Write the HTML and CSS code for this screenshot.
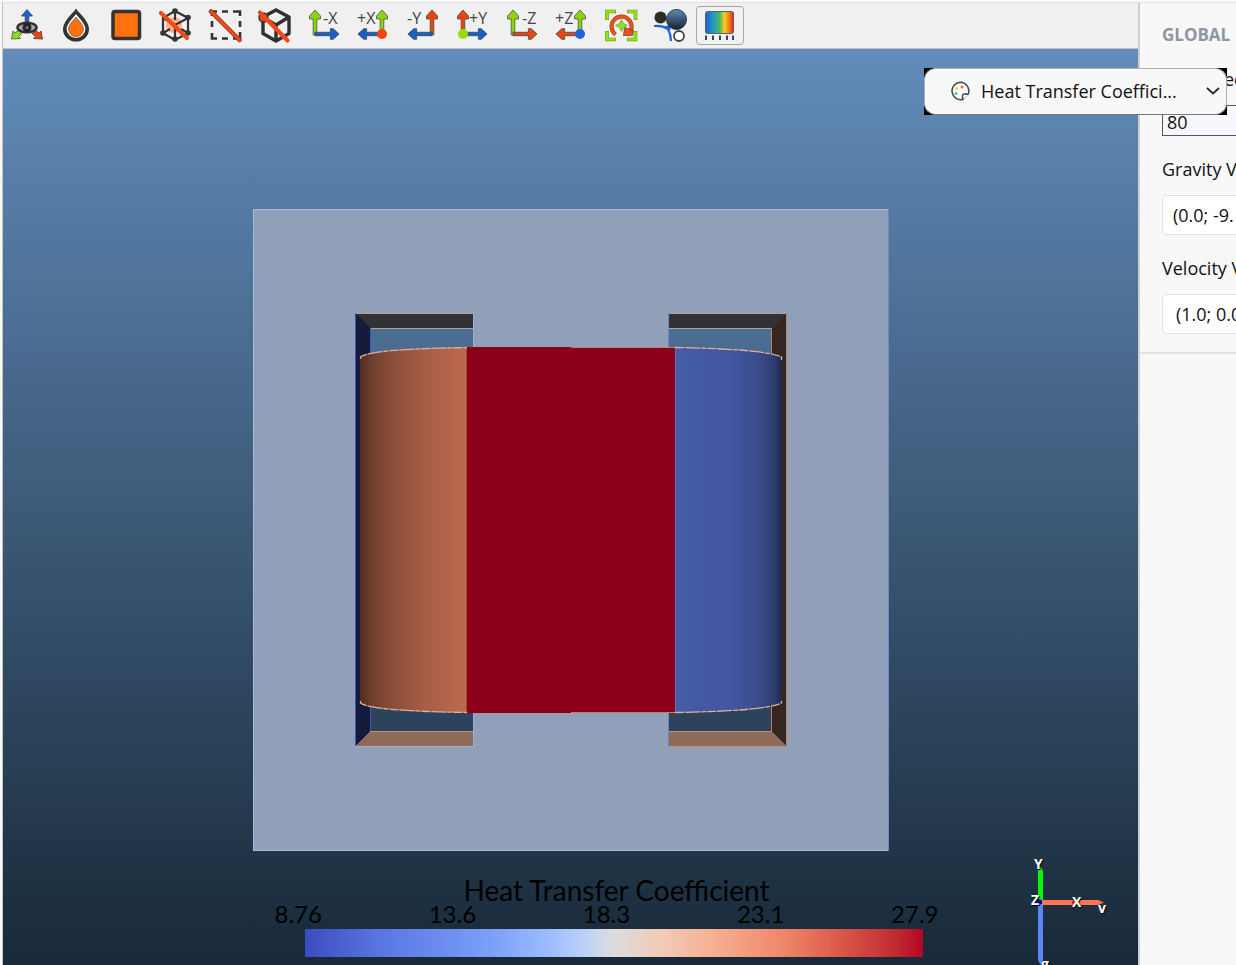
FILE: index.html
```html
<!DOCTYPE html>
<html lang="en">
<head>
<meta charset="utf-8">
<title>Heat Transfer Coefficient</title>
<link rel="stylesheet" href="styles.css">
</head>
<body>
<svg class="defs" aria-hidden="true">
  <defs>
    <linearGradient id="ball" x1="0" y1="0" x2="0" y2="1"><stop offset="0" stop-color="#5f8cbc"/><stop offset="1" stop-color="#14222f"/></linearGradient>
    <linearGradient id="rainbow"><stop offset="0" stop-color="#1f5fd0"/><stop offset=".3" stop-color="#23a0c0"/><stop offset=".5" stop-color="#4db560"/><stop offset=".68" stop-color="#f0d020"/><stop offset=".85" stop-color="#f57a1c"/><stop offset="1" stop-color="#e8201c"/></linearGradient>
    <symbol id="up" viewBox="0 0 12 27" overflow="visible"><path d="M4.200 26V10H.5V7L6 1l5.500 6v3H7.800V26z" stroke="#454" stroke-width=".8"/></symbol>
    <symbol id="side" viewBox="0 0 27 12" overflow="visible"><path d="M1 4.200H17V.5h3L26 6l-6 5.500h-3V7.800H1z" stroke="#345" stroke-width=".8"/></symbol>
  </defs>
</svg>
<div class="app">
  <main class="stage">
    <div class="toolbar" role="toolbar">
      <button class="tool" aria-label="Show axes"><svg viewBox="0 0 36 36"><path d="M16.200 15V9h-3.700L18 2.500 23.500 9h-3.700v6z" fill="#1f62d0" stroke="#345" stroke-width=".8"/><path d="M9.500 23.500l-4 2.500L4 24 2.500 32l9-.5-2-2 3.500-3z" fill="#8fdc1a" stroke="#453" stroke-width=".8"/><path d="M26.500 23.500l4 2.500 1.500-2 1.500 8-9-.5 2-2-3.500-3z" fill="#e8480f" stroke="#533" stroke-width=".8"/><ellipse cx="18" cy="20.500" rx="9.500" ry="4.800" fill="#aaa" stroke="#303030" stroke-width="2.600"/><circle cx="18" cy="20.500" r="4.500" fill="#252525"/><circle cx="18" cy="20.500" r="1.500" fill="#777"/></svg></button>
      <button class="tool" aria-label="Surface tint"><svg viewBox="0 0 36 36"><path d="M18 4.500C14 9.500 6.800 15 6.800 22a11.200 10.800 0 0 0 22.400 0C29.200 15 22 9.500 18 4.500z" fill="#fff" stroke="#333" stroke-width="3.600"/><path d="M18 10c-3 4-7.500 7.500-7.500 12a7.500 7.800 0 0 0 15 0C25.500 17.500 21 14 18 10z" fill="#ff700f" stroke="#555" stroke-width=".6"/></svg></button>
      <button class="tool" aria-label="Solid surface"><svg viewBox="0 0 36 36"><rect x="5" y="4.500" width="26.500" height="27" rx="2" fill="#ff700f" stroke="#333" stroke-width="3.500"/></svg></button>
      <button class="tool" aria-label="Hide points"><svg viewBox="0 0 36 36"><circle cx="17" cy="18" r="8" fill="#ff9a63" opacity=".75"/><path d="M18 4l13 7v15l-13 7-12-7V11zM18 18l13-7M18 18v15M18 18L6 11M18 4v9M6 26l7-4M31 26l-7-4" fill="none" stroke="#333" stroke-width="2.200"/><g fill="#333"><circle cx="18" cy="4" r="2.800"/><circle cx="31" cy="10.500" r="2.800"/><circle cx="31" cy="26" r="2.800"/><circle cx="18" cy="32" r="2.800"/><circle cx="6" cy="26" r="2.800"/></g><path d="M4 6l26 25" stroke="#f04a18" stroke-width="4.200" stroke-linecap="round"/></svg></button>
      <button class="tool" aria-label="Clear selection"><svg viewBox="0 0 36 36"><path d="M5 9V4.500h5M15 4.500h6M26 4.500h7V9M33 14v6M33 25v6.500h-7M21 31.500h-6M10 31.500H5V26M5 20v-6" fill="none" stroke="#333" stroke-width="2.600"/><path d="M4 4.500L32.500 33" stroke="#963018" stroke-width="4.500" stroke-linecap="round"/><path d="M4 4.500L32.500 33" stroke="#f84a0c" stroke-width="3" stroke-linecap="round"/></svg></button>
      <button class="tool" aria-label="Hide outline"><svg viewBox="0 0 36 36"><path d="M20 3l13 7v16.500L20 34 7 26.500V10zM20 18v15M20 18l13-8M20 18L8 11" fill="none" stroke="#303030" stroke-width="3.400"/><circle cx="7.500" cy="10.500" r="4.500" fill="#d85218" stroke="#433" stroke-width="1.500"/><path d="M4 5.500l27.500 28" stroke="#f04a18" stroke-width="4.200" stroke-linecap="round"/></svg></button>
      <button class="tool" aria-label="View minus X"><svg viewBox="0 0 36 36"><use href="#up" x="3" y="2" width="12" height="27" fill="#8fd40a"/><use href="#side" x="8" y="21" width="26" height="12" fill="#1b5fc6"/><text x="17" y="17">-X</text></svg></button>
      <button class="tool" aria-label="View plus X"><svg viewBox="0 0 36 36"><use href="#up" x="21" y="2" width="12" height="27" fill="#8fd40a"/><g transform="matrix(-1 0 0 1 36 0)"><use href="#side" x="8" y="21" width="26" height="12" fill="#1b5fc6"/></g><circle cx="27" cy="27" r="5" fill="#ff4208"/><text x="2" y="17">+X</text></svg></button>
      <button class="tool" aria-label="View minus Y"><svg viewBox="0 0 36 36"><use href="#up" x="21" y="2" width="12" height="27" fill="#e9440b"/><g transform="matrix(-1 0 0 1 36 0)"><use href="#side" x="8" y="21" width="26" height="12" fill="#1b5fc6"/></g><text x="2" y="17">-Y</text></svg></button>
      <button class="tool" aria-label="View plus Y"><svg viewBox="0 0 36 36"><use href="#up" x="3" y="2" width="12" height="27" fill="#e9440b"/><use href="#side" x="8" y="21" width="26" height="12" fill="#1b5fc6"/><circle cx="9" cy="27" r="5" fill="#94dd05"/><text x="15" y="17">+Y</text></svg></button>
      <button class="tool" aria-label="View minus Z"><svg viewBox="0 0 36 36"><use href="#up" x="3" y="2" width="12" height="27" fill="#8fd40a"/><use href="#side" x="8" y="21" width="26" height="12" fill="#e9440b"/><text x="18" y="17">-Z</text></svg></button>
      <button class="tool" aria-label="View plus Z"><svg viewBox="0 0 36 36"><use href="#up" x="21" y="2" width="12" height="27" fill="#8fd40a"/><g transform="matrix(-1 0 0 1 36 0)"><use href="#side" x="8" y="21" width="26" height="12" fill="#e9440b"/></g><circle cx="27" cy="27" r="5" fill="#1c64dc"/><text x="2" y="17">+Z</text></svg></button>
      <button class="tool" aria-label="Reset camera"><svg viewBox="0 0 36 36"><path d="M4 13V4.500h9M24 4.500h8.500V13M32.500 24v8.500H24M13 32.500H4V24" fill="none" stroke="#688b27" stroke-width="3.600"/><path d="M4 12.500V4.500h8.500M24.500 4.500h8v8M32.500 24.500v8h-8M12.500 32.500H4v-8" fill="none" stroke="#94e30b" stroke-width="2.600"/><path d="M12.500 27.500A10 10 0 1 1 27 25" fill="none" stroke="#74351f" stroke-width="4"/><path d="M12.500 27.500A10 10 0 1 1 27 25" fill="none" stroke="#ed511b" stroke-width="3"/><path d="M20.500 28.500l1-8 9 3-1 5z" fill="#ed511b" stroke="#74351f" stroke-width=".7"/><path d="M18.500 12.500l2 4 4 2-4 2-2 4-2-4-4-2 4-2z" fill="#8de020" stroke="#668a2b" stroke-width=".6"/></svg></button>
      <button class="tool" aria-label="Environment"><svg viewBox="0 0 36 36"><circle cx="8.500" cy="10.500" r="6" fill="#2b2b27"/><path d="M2 19c6-.5 10 .5 14 3M19 34c0-5-1-8-3-12" fill="none" stroke="#1c63d9" stroke-width="2.200"/><path d="M12 20l7-3-1 7z" fill="#1c63d9"/><circle cx="24.500" cy="12.500" r="10" fill="url(#ball)" stroke="#2a3440" stroke-width="1"/><circle cx="27" cy="29" r="5" fill="#fff" stroke="#444" stroke-width="1.800"/></svg></button>
      <button class="tool tool-on" aria-label="Color legend" aria-pressed="true"><svg viewBox="0 0 36 36"><rect x="3.500" y="4.500" width="28" height="22" rx="2" fill="url(#rainbow)" stroke="#56616c" stroke-width="1"/><path d="M4 28.500v4.500M11 28.500v4.500M18 28.500v4.500M25 28.500v4.500M31 28.500v4.500" stroke="#27344f" stroke-width="1.800"/></svg></button>
    </div>
    <section class="viewport">
      <svg class="model" viewBox="253 209 636 642" role="img" aria-label="Heated block model">
        <defs>
          <linearGradient id="copper"><stop offset="0" stop-color="#512d21"/><stop offset=".12" stop-color="#70402f"/><stop offset=".3" stop-color="#8b4d39"/><stop offset=".6" stop-color="#a75d46"/><stop offset="1" stop-color="#bd694e"/></linearGradient>
          <linearGradient id="cobalt"><stop offset="0" stop-color="#465ca8"/><stop offset=".55" stop-color="#42549f"/><stop offset=".8" stop-color="#394b87"/><stop offset=".93" stop-color="#2d3b6c"/><stop offset="1" stop-color="#1e2849"/></linearGradient>
        </defs>
        <path fill="#8fa0b8" fill-rule="evenodd" d="M253 209h636v642H253zM355 313v434h119V313zM668 313v434h119V313z"/>
        <path d="M253.500 850V209.500H888" fill="none" stroke="#a8b9e2"/><path d="M253 850.500h635" stroke="#a8b4d4"/><path d="M888.500 209v642" stroke="#7486cc"/>
        <g shape-rendering="crispEdges">
          <path d="M355 313h119v15H370z" fill="#323234"/><path d="M355 313l15 15v403l-15 16z" fill="#151c3b"/><path d="M370 731h104v16H355z" fill="#8e6b58"/>
          <path d="M668 313h119l-15 15H668z" fill="#323234"/><path d="M787 313l-15 15v403l15 16z" fill="#352622"/><path d="M668 731h104l15 16H668z" fill="#8e6b58"/>
        </g>
        <g fill="none"><path d="M355 313.500h118M370 328.500h103M668 313.500h119M668 328.500h104" stroke="#aaa398"/><path d="M355.500 313v434M370.500 328v403" stroke="#4056b5"/><path d="M370 731.500h103M668 731.500h104M668 746.500h119" stroke="#c49078"/><path d="M355 746.500h119M473.500 313v35M473.500 713v34" stroke="#a3acd0"/><path d="M668.500 313v35M668.500 713v34" stroke="#7084ca"/><path d="M771.500 328v403M786.500 313v434" stroke="#b9816a"/></g>
        <path d="M360 357Q370 349 467 347.500V712.500Q370 711 360 703z" fill="url(#copper)"/>
        <path d="M675 347.500Q765 349 782 357V703Q765 711 675 712.500z" fill="url(#cobalt)"/>
        <path d="M467 347h208v366H467z" fill="#8d0019"/>
        <path d="M571 347.500h104M571 712.500h104" stroke="#b88375"/><path d="M466.500 348v364" stroke="#a54632"/><path d="M675.500 348v364" stroke="#5d70c2"/>
        <g fill="none" stroke="#dfb0a0" stroke-width="1.300" stroke-dasharray="9 1 15 1 5 1"><path d="M360.500 359v-2Q370 349 467 347.500M675 347.500Q765 349 781.500 357v3"/><path d="M360.500 701v2Q370 711 467 712.500M675 712.500Q765 711 781.500 703v-2"/></g>
      </svg>
      <div class="legend">
        <div class="legend-title">Heat Transfer Coefficient</div>
        <div class="legend-labels"><span>8.76</span><span>13.6</span><span>18.3</span><span>23.1</span><span>27.9</span></div>
        <div class="legend-bar"></div>
      </div>
      <svg class="triad" viewBox="1020 850 100 115" role="img" aria-label="Orientation axes">
        <path d="M1038 871l2.500-5 2.500 5v31h-5z" fill="#08f50c"/><path d="M1038 903h5v57l-2.500 5-2.500-5z" fill="#5a86f8"/><path d="M1041 900h57l6 2.500-6 2.500h-57z" fill="#ff7357"/><path d="M1037 899l5 1v4l-4 1z" fill="#0608b8"/><circle cx="1074.500" cy="902.500" r="2.500" fill="#d90d20"/>
        <text x="1034" y="869">Y</text><text x="1031" y="905">Z</text><text x="1072" y="907">X</text><text x="1098" y="913">v</text><text x="1041" y="969">g</text>
      </svg>
    </section>
  </main>
  <aside class="panel">
    <div class="panel-body">
      <h2>GLOBAL</h2>
      <label class="label-end" for="first">ec</label>
      <input class="plain" id="first" value="80">
      <label for="gravity">Gravity V</label>
      <input id="gravity" value="(0.0; -9.">
      <label for="velocity">Velocity V</label>
      <input class="inset" id="velocity" value="(1.0; 0.0">
    </div>
  </aside>
  <div class="picker">
    <div class="picker-box">
      <svg class="palette" viewBox="0 0 20 20" aria-hidden="true"><path d="M10 1.200A8.800 8.800 0 1 0 12.500 18.600V15q0-2 2-2h3.800A8.800 8.800 0 0 0 10 1.200zM12.500 18.600l5.800-5.600" fill="#fff" stroke="#414756" stroke-width="1.500" stroke-linejoin="round"/><path d="M13.600 14h4.700l-4.700 4.600z" fill="#f8f8f8"/><circle cx="12" cy="6" r="1.500" fill="#ee6a3c"/><circle cx="6.500" cy="7.500" r="1.500" fill="#f3c94a"/><circle cx="6" cy="12.500" r="1.500" fill="#55c5a2"/></svg>
      <select aria-label="Color by"><option>Heat Transfer Coeffici...</option></select>
      <svg class="chevron" viewBox="0 0 14 8" aria-hidden="true"><path d="M1 1l6 5.500L13 1" fill="none" stroke="#292929" stroke-width="1.800"/></svg>
    </div>
  </div>
</div>
</body>
</html>
```

FILE: styles.css
```css
* { box-sizing: border-box; }

body {
  margin: 0;
  background: #f8f8f8;
  color: #111;
  font: 18px/24px "Open Sans", "Noto Sans", sans-serif;
}

.defs { position: absolute; width: 0; height: 0; }

.app {
  position: relative;
  display: flex;
  min-height: 100vh;
  padding-top: 2px;
  overflow: hidden;
}

.stage {
  flex: 1;
  min-width: 0;
  display: flex;
  flex-direction: column;
  border-left: 1px solid #c4c4c4;
  margin-left: 2px;
}

.toolbar {
  display: flex;
  justify-content: space-between;
  height: 47px;
  padding: 3px calc(100% - 741px) 3px 0;
  background: #f0f0f0;
  border-top: 1px solid #e0e3ec;
  border-bottom: 1px solid #c0c0c0;
}

.tool {
  flex: 0 0 48px;
  height: 39px;
  padding: 0 1px 2px 0;
  border: 1px solid transparent;
  border-radius: 4px;
  background: none;
  display: flex;
  align-items: center;
  justify-content: center;
}

.tool svg { width: 36px; height: 36px; flex: none; }
.tool text { font: 16px "Open Sans", sans-serif; fill: #444; }
.tool-on { border-color: #a8a8a8; }

.viewport {
  position: relative;
  flex: 1;
  display: flex;
  flex-direction: column;
  align-items: center;
  padding-top: 160px;
  overflow: hidden;
  background: linear-gradient(#628cba, #182938);
}

.model { width: 636px; max-width: 100%; flex: none; }

.legend {
  width: 664px;
  margin: 26px 0 8px 72px;
  color: #000;
  font-family: Lato, sans-serif;
}

.legend-title { font-size: 28px; line-height: 27px; text-align: center; padding-left: 20px; }
.legend-labels { display: flex; justify-content: space-between; font-size: 24px; line-height: 20px; }

.legend-bar {
  height: 28px;
  margin: 5px 16px 0 30px;
  background: linear-gradient(90deg, #3b4cc0, #5977e3 12.5%, #7b9ff9 30%, #9ebeff 40%, #c0d4f5 46%, #dddcdc 50%, #f2cab5 58%, #f7ac8e 67%, #ee8468 78%, #d65244 88%, #c0282f 96%, #b40426);
}

.triad { position: absolute; right: 18px; bottom: 0; width: 100px; height: 115px; }

.triad text {
  font: bold 14px "Open Sans", sans-serif;
  fill: #fff;
  text-shadow: 1px 1px 1px #000;
}

.panel {
  flex: 0 0 98px;
  overflow: hidden;
  border-left: 2px solid #d0d0d0;
  border-top: 1px solid #e0e3ec;
}

.panel-body {
  display: flex;
  flex-direction: column;
  width: 300px;
  padding: 20px 22px 18px;
  border-bottom: 2px solid #e0e1ea;
}

.panel h2 { margin: 0 0 20px; font-size: 17px; line-height: 24px; color: #8d96a5; }
.panel label { margin-bottom: 14px; }
.label-end { padding-left: 62px; }

.panel input {
  width: 100%;
  height: 40px;
  margin-bottom: 21px;
  padding: 0 10px;
  border: 1px solid #dfe0ea;
  border-radius: 5px;
  background: #fff;
  color: #111;
  font: inherit;
}

.panel .plain {
  height: 31px;
  padding: 2px 4px 0;
  border: 1px solid #57506f;
  border-radius: 0;
  background: #f7f8ff;
}

.panel .inset { padding-left: 13px; margin-bottom: 0; }

.picker {
  position: absolute;
  top: 68px;
  right: 9px;
  width: 303px;
  height: 47px;
  background: #000;
}

.picker-box {
  display: flex;
  align-items: center;
  height: 100%;
  padding: 0 6px 2px 25px;
  border: 1px solid #b0b0b0;
  border-bottom-color: #777;
  border-radius: 12px;
  background: #f8f8f8;
}

.palette { width: 20px; height: 20px; flex: none; }

.picker select {
  flex: 1;
  min-width: 0;
  margin: 0 4px 0 11px;
  padding: 0;
  border: 0;
  appearance: none;
  background: none;
  color: #111;
  font: inherit;
}

.chevron { width: 14px; height: 8px; flex: none; }
```
